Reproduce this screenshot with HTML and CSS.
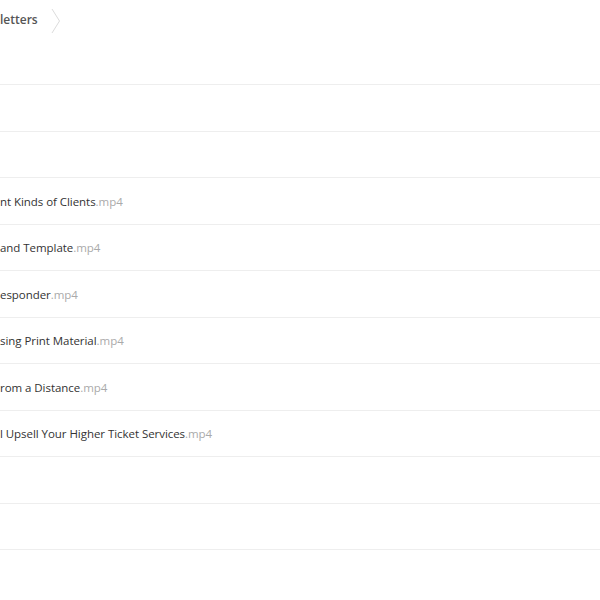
FILE: index.html
```html
<!DOCTYPE html>
<html>
<head>
<meta charset="utf-8">
<link rel="stylesheet" href="styles.css">
</head>
<body>
<div class="page">
  <div class="header">
    <div class="crumbs">
      <span class="crumb">letters</span>
      <svg class="chev" width="10" height="26" viewBox="0 0 10 26"><path d="M1 1 L8.5 13 L1 25" fill="none" stroke="#dcdcdc" stroke-width="1"/></svg>
    </div>
  </div>
  <ul class="files">
    <li class="row"></li>
    <li class="row"></li>
    <li class="row"><span class="name">nt Kinds of Clients</span><span class="ext">.mp4</span></li>
    <li class="row"><span class="name">and Template</span><span class="ext">.mp4</span></li>
    <li class="row"><span class="name">esponder</span><span class="ext">.mp4</span></li>
    <li class="row"><span class="name">sing Print Material</span><span class="ext">.mp4</span></li>
    <li class="row"><span class="name">rom a Distance</span><span class="ext">.mp4</span></li>
    <li class="row"><span class="name">l Upsell Your Higher Ticket Services</span><span class="ext">.mp4</span></li>
    <li class="row"></li>
    <li class="row"></li>
  </ul>
</div>
</body>
</html>
```
FILE: styles.css
```css
html, body {
  margin: 0;
  padding: 0;
  background: #fff;
}
body {
  font-family: "Open Sans", "Liberation Sans", sans-serif;
  color: #333;
  overflow: hidden;
}
.page {
  width: 600px;
}
.header {
  height: 84px;
  border-bottom: 1px solid #eeeeee;
}
.crumbs {
  display: flex;
  align-items: center;
  gap: 13px;
  height: 42px;
}
.crumb {
  font-size: 12px;
  font-weight: 600;
  color: #555;
  margin-top: -3px;
}
.chev {
  display: block;
}
.files {
  list-style: none;
  margin: 0;
  padding: 0;
}
.row {
  height: 45.5px;
  border-bottom: 1px solid #eeeeee;
  display: flex;
  align-items: center;
  padding-top: 1px;
  box-sizing: border-box;
  height: 46.5px;
  font-size: 11.5px;
  letter-spacing: -0.05px;
  white-space: nowrap;
}
.name {
  color: #333;
}
.ext {
  color: #aaa;
}
```
